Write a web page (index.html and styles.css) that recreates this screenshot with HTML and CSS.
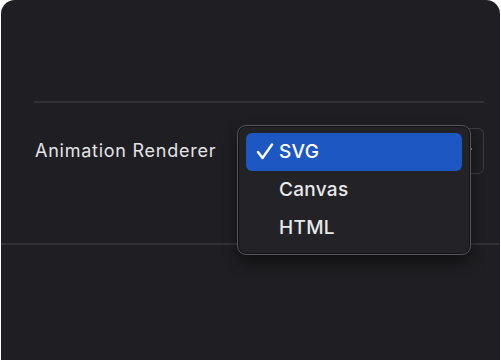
FILE: index.html
```html
<!DOCTYPE html>
<html>
<head>
<meta charset="utf-8">
<link rel="stylesheet" href="styles.css">
</head>
<body>
<div class="panel">
  <div class="section">
    <div class="top-space"></div>
    <div class="divider"></div>
    <div class="row">
      <span class="label">Animation Renderer</span>
      <div class="select"><span class="dot"></span></div>
    </div>
  </div>
  <div class="divider full"></div>
  <div class="menu">
    <div class="item selected">
      <svg class="check" width="18" height="17" viewBox="0 0 18 17"><path d="M2 9 L6.5 15 L16 1.5" fill="none" stroke="#fff" stroke-width="2.4" stroke-linecap="round" stroke-linejoin="round"/></svg>
      <span>SVG</span>
    </div>
    <div class="item"><span>Canvas</span></div>
    <div class="item"><span>HTML</span></div>
  </div>
</div>
</body>
</html>
```
FILE: styles.css
```css
html, body {
  margin: 0;
  padding: 0;
  background: #ffffff;
  height: 360px;
  overflow: hidden;
}
.panel {
  position: relative;
  margin-left: 1px;
  width: 499px;
  height: 360px;
  background: #1f1f23;
  border-radius: 14px 14px 0 0;
  font-family: Inter, "Noto Sans", sans-serif;
  color: #e6e6e8;
}
.section {
  padding: 0 16px 0 33px;
}
.top-space {
  height: 101px;
}
.divider {
  height: 2px;
  background: #323237;
}
.row {
  height: 140px;
  display: flex;
  align-items: flex-start;
  justify-content: space-between;
  padding-top: 25px;
  box-sizing: border-box;
}
.label {
  padding-left: 1px;
  font-size: 18px;
  line-height: 46px;
  color: #e3e3e6;
  letter-spacing: 0.75px;
}
.select {
  position: relative;
  width: 150px;
  height: 46px;
  border: 1px solid #3c3c42;
  border-radius: 6px;
  box-sizing: border-box;
}
.dot {
  position: absolute;
  right: 11px;
  top: 19px;
  width: 2px;
  height: 2px;
  background: #8a8a90;
}
.menu {
  position: absolute;
  left: 236px;
  top: 125px;
  width: 234px;
  height: 130px;
  box-sizing: border-box;
  padding: 7px 8px;
  background: #232327;
  border: 1px solid #55555b;
  border-radius: 9px;
  box-shadow: 0 8px 14px rgba(0,0,0,0.45), inset 0 0 0 1px #141416;
}
.item {
  position: relative;
  height: 38px;
  padding-left: 33px;
  font-size: 19px;
  font-weight: 500;
  line-height: 38px;
  color: #e8e8ea;
  letter-spacing: 0.3px;
  border-radius: 6px;
}
.item.selected {
  background: #1d58c2;
  color: #ffffff;
}
.check {
  position: absolute;
  left: 10px;
  top: 10px;
}
```
